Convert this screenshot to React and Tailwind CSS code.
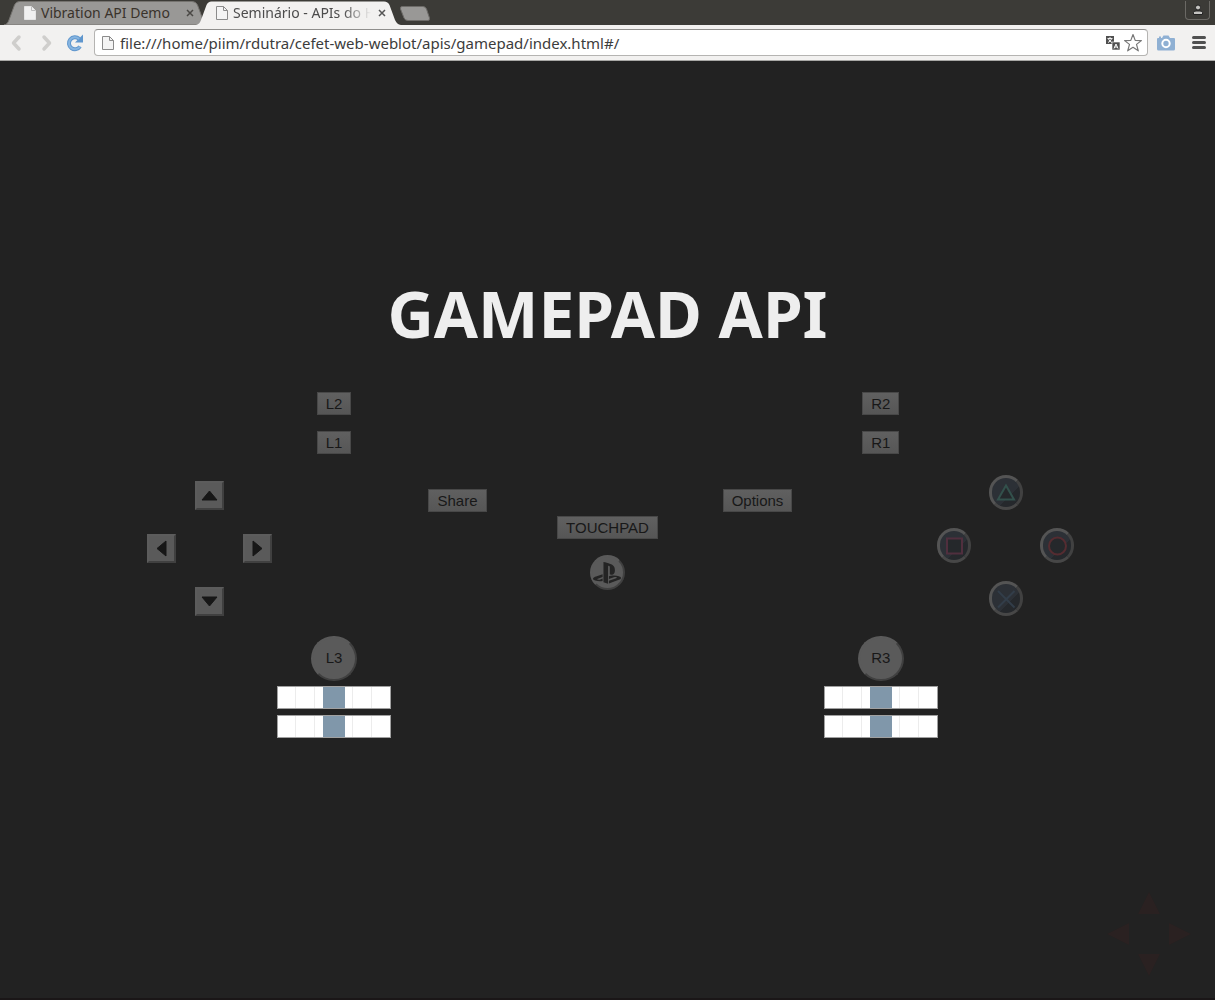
import React from "react";
import { FaPlaystation } from "react-icons/fa";

const uiFont = "font-['Noto_Sans','Open_Sans',sans-serif]";
const padFont = "font-['Liberation_Sans',Arial,sans-serif]";

function PageIcon({ filled = false, className }) {
  return (
    <svg viewBox="0 0 12 16" className={className} aria-hidden="true">
      <path d="M.5 1.5h7l4 4v9h-11z" fill={filled ? "#f0f0f0" : "#f4f4f4"} stroke={filled ? "#e4e4e4" : "#8b8b8b"} />
      <path d="M7.5 1.5v4h4" fill="none" stroke={filled ? "#bdbdbd" : "#8b8b8b"} />
    </svg>
  );
}

function Tab({ title, active }) {
  return (
    <div className={active ? "relative z-10 -ml-[13px] h-6 w-[205px]" : "relative h-6 w-[205px]"}>
      <svg viewBox="0 0 205 24" preserveAspectRatio="none" className="absolute inset-0 h-full w-full" aria-hidden="true">
        <path
          d="M0 24C3 23.500 4 21.500 5 19L10.500 4Q12 0.500 15.500 0.500H188Q192 0.500 193.500 4L199 19C200.500 22 202 23.500 205 24Z"
          fill={active ? "#f2f1f0" : "#999896"}
          stroke={active ? "none" : "#75736f"}
        />
      </svg>
      <div className="relative flex h-full items-center pl-5 pr-[13px]">
        <button className="flex min-w-0 flex-1 items-center gap-[5px] text-left">
          <PageIcon filled={!active} className="h-4 w-3 shrink-0" />
          <span
            className={
              active
                ? "whitespace-nowrap text-sm leading-5 text-[#4c4c4c] [mask-image:linear-gradient(to_right,black_110px,transparent_138px)]"
                : "whitespace-nowrap text-sm leading-5 text-[#3a332b]"
            }
          >
            {title}
          </span>
        </button>
        <button aria-label={"Close " + title} className="flex size-3 items-center justify-center">
          <svg viewBox="0 0 8 8" className="size-2">
            <path d="M1 1l6 6M7 1L1 7" stroke={active ? "#555" : "#4a4845"} strokeWidth="1.500" />
          </svg>
        </button>
      </div>
    </div>
  );
}

function Chevron({ flip }) {
  return (
    <button aria-label={flip ? "Forward" : "Back"} className="flex h-6 w-3 items-center justify-center">
      <svg viewBox="0 0 12 18" className={flip ? "h-[18px] w-3 -scale-x-100" : "h-[18px] w-3"}>
        <path d="M9 3L3.500 9L9 15" fill="none" stroke="#cfcecc" strokeWidth="3.500" strokeLinecap="round" strokeLinejoin="round" />
      </svg>
    </button>
  );
}

function BrowserChrome() {
  return (
    <header className={uiFont}>
      <div className="flex h-[25px] items-end bg-[#3c3b37] pl-1">
        <Tab title="Vibration API Demo" />
        <Tab title="Seminário - APIs do H" active />
        <button aria-label="New tab" className="-ml-0.5 mb-1 h-[15px] w-8">
          <svg viewBox="0 0 32 15" className="h-full w-full">
            <path d="M3 .5H24Q26.500 .5 27.500 3L30.500 12Q31 14.500 29 14.500H9Q6 14.500 5 12L1.500 3Q1 .5 3 .5Z" fill="#999896" stroke="#6d6b68" />
          </svg>
        </button>
        <button aria-label="User" className="mb-[5px] ml-auto mr-[5px] flex h-[19px] w-[25px] items-center justify-center rounded-b border border-t-0 border-[#6b6965] bg-[#3c3b37]">
          <svg viewBox="0 0 12 12" className="size-3 shrink-0">
            <path d="M1.500 10.500V8.500Q1.500 7 4 7H8Q10.500 7 10.500 8.500V10.500Z" fill="#c4c3c0" stroke="#222" />
            <circle cx="6" cy="3.500" r="2.500" fill="#c4c3c0" stroke="#222" />
          </svg>
        </button>
      </div>
      <div className="flex h-9 items-center border-b border-[#a9a8a6] bg-[#f2f1f0] pl-2.5 pr-[9px]">
        <Chevron />
        <div className="w-[19px]" />
        <Chevron flip />
        <button aria-label="Reload" className="ml-[13px] size-[18px]">
          <svg viewBox="0 0 18 18" className="size-[18px]">
            <path d="M14 12.500A6 6 0 1 1 13 4.800" fill="none" stroke="#5f96cd" strokeWidth="4" />
            <path d="M9 8.500H17V.5Z" fill="#5f96cd" />
            <path d="M14 12.500A6 6 0 1 1 13 4.800" fill="none" stroke="#86b4e0" strokeWidth="2" />
          </svg>
        </button>
        <div className="ml-2.5 flex h-[27px] flex-1 items-center rounded-sm border border-[#b5b4b2] border-t-[#8f8e8c] bg-white pl-[7px] pr-1">
          <PageIcon className="h-4 w-3 shrink-0" />
          <input
            aria-label="Address"
            type="text"
            defaultValue="file:///home/piim/rdutra/cefet-web-weblot/apis/gamepad/index.html#/"
            className="ml-1.5 min-w-0 flex-1 bg-transparent text-[15px] leading-6 text-[#3c3c3c] outline-none"
          />
          <button aria-label="Translate" className="size-4">
            <svg viewBox="0 0 16 16" className="size-4">
              <path d="M1 1h8v8H1z" fill="#505050" />
              <path d="M2.500 3.500h5M5 2v1.500M3.500 4Q4.500 6.500 7 7.500M6.500 4Q5.500 6.500 3 7.500" stroke="#fff" strokeWidth=".9" fill="none" />
              <path d="M7 7h8v8H7z" fill="#505050" stroke="#fff" strokeWidth=".6" />
              <path d="M9 13.500L11 9l2 4.500M9.700 12h2.600" stroke="#fff" fill="none" />
            </svg>
          </button>
          <button aria-label="Bookmark" className="ml-0.5 size-5">
            <svg viewBox="0 0 20 20" className="size-5">
              <path d="M10 1.500L12.200 7.400L18.400 7.600L13.500 11.400L15.300 17.800L10 14.300L4.700 17.800L6.500 11.400L1.600 7.600L7.800 7.400Z" fill="#fff" stroke="#777" strokeWidth="1.200" strokeLinejoin="round" />
            </svg>
          </button>
        </div>
        <button aria-label="Screenshot" className="ml-[9px] h-[18px] w-[18px]">
          <svg viewBox="0 0 18 18" className="size-[18px]">
            <path d="M0 5Q0 4 1 4H2V2.500H4V4H5L6.500 1.500H11.500L13 4H17Q18 4 18 5V15Q18 16.500 16.500 16.500H1.500Q0 16.500 0 15Z" fill="#8fb0d3" />
            <circle cx="9" cy="9.500" r="3.700" fill="#8fb0d3" stroke="#fff" strokeWidth="2" />
          </svg>
        </button>
        <button aria-label="Menu" className="ml-[17px] flex w-3.5 flex-col gap-0.5">
          <span className="h-[3px] rounded-sm bg-[#505050]" />
          <span className="h-[3px] rounded-sm bg-[#505050]" />
          <span className="h-[3px] rounded-sm bg-[#505050]" />
        </button>
      </div>
    </header>
  );
}

function PadButton({ children }) {
  return (
    <button className="h-[23px] border border-[#484848] bg-linear-to-b from-[#606060] to-[#565656] px-2 text-[15px] leading-5 text-[#181818]">
      {children}
    </button>
  );
}

const arrowPaths = {
  Up: "M8.500 4L16 13H1Z",
  Down: "M1 4H16L8.500 13Z",
  Left: "M4 8.500L13 1V16Z",
  Right: "M4 1L13 8.500L4 16Z",
};

function ArrowButton({ dir }) {
  return (
    <button aria-label={dir} className="flex size-[29px] items-center justify-center border-2 border-b-[#404040] border-l-[#5c5c5c] border-r-[#404040] border-t-[#5c5c5c] bg-[#5a5a5a]">
      <svg viewBox="0 0 17 17" className="size-[17px] shrink-0">
        <path d={arrowPaths[dir]} fill="#171717" stroke="#171717" strokeLinejoin="round" />
      </svg>
    </button>
  );
}

function FaceButton({ label, color, children }) {
  return (
    <button aria-label={label} className="flex h-[35px] w-[34px] items-center justify-center rounded-full border-3 border-[#545454] border-b-[#474747] border-r-[#414141] bg-linear-to-br from-[#2c3036] from-60% to-[#25282c] to-60% bg-origin-border">
      <svg viewBox="0 0 20 20" className="size-5 shrink-0" fill="#25282b" stroke={color} strokeWidth="2">
        {children}
      </svg>
    </button>
  );
}

function Cross({ top, left, right, bottom, className }) {
  return (
    <div className={"flex flex-col items-center " + className}>
      {top}
      <div className="flex w-full justify-between">
        {left}
        {right}
      </div>
      {bottom}
    </div>
  );
}

function Axis({ label }) {
  return (
    <input
      type="range"
      aria-label={label}
      defaultValue="50"
      className="block h-[23px] w-[114px] appearance-none border border-[#a0a0a0] bg-[repeating-linear-gradient(to_right,#fff_0_17px,#ececec_17px_18px,#fff_18px_19px)] [&::-webkit-slider-thumb]:h-[21px] [&::-webkit-slider-thumb]:w-[22px] [&::-webkit-slider-thumb]:appearance-none [&::-webkit-slider-thumb]:bg-[#8097aa]"
    />
  );
}

function Stick({ name }) {
  return (
    <div className="flex flex-col items-center">
      <button className="h-[45px] w-[46px] rounded-full border-2 border-[#5a5a5a] border-b-[#404040] border-r-[#404040] bg-[#5a5a5a] text-[15px] text-[#181818]">
        {name}
      </button>
      <div className="mt-[5px] flex flex-col gap-1.5">
        <Axis label={name + " horizontal"} />
        <Axis label={name + " vertical"} />
      </div>
    </div>
  );
}

const slideControls = [
  { label: "Slide up", cell: "col-start-2 row-start-1", d: "M11 0L22 22H0Z" },
  { label: "Previous slide", cell: "col-start-1 row-start-2", d: "M0 11L22 0V22Z" },
  { label: "Next slide", cell: "col-start-3 row-start-2", d: "M22 11L0 0V22Z" },
  { label: "Slide down", cell: "col-start-2 row-start-3", d: "M0 0H22L11 22Z" },
];

export default function App() {
  return (
    <div className="flex min-h-screen flex-col bg-[#222222]">
      <BrowserChrome />
      <main className="relative flex flex-1 flex-col items-center border-b-2 border-[#1a1617] pt-[214px]">
        <h1 className={uiFont + " text-center text-[64px] font-bold leading-[78px] text-[#eeeeee]"}>GAMEPAD API</h1>
        <section aria-label="Gamepad" className={padFont + " flex w-full flex-col items-center pt-[39px]"}>
          <div className="grid w-[90%] grid-cols-2 justify-items-center gap-y-4">
            <PadButton>L2</PadButton>
            <PadButton>R2</PadButton>
            <PadButton>L1</PadButton>
            <PadButton>R1</PadButton>
          </div>
          <div className="mt-[21px] flex w-[77%] justify-between px-px">
            <div className="w-[137px] px-1.5 pt-1.5">
              <Cross
                className="gap-6"
                top={<ArrowButton dir="Up" />}
                left={<ArrowButton dir="Left" />}
                right={<ArrowButton dir="Right" />}
                bottom={<ArrowButton dir="Down" />}
              />
            </div>
            <div className="grid w-[450px] grid-cols-3 content-start justify-items-center pt-3.5">
              <PadButton>Share</PadButton>
              <div className="flex flex-col items-center gap-4 pt-[27px]">
                <PadButton>TOUCHPAD</PadButton>
                <button aria-label="PS" className="flex size-[35px] items-center justify-center rounded-full border-2 border-[#5a5a5a] border-b-[#404040] border-r-[#404040] bg-[#5a5a5a] text-[#242424]">
                  <FaPlaystation className="size-7 shrink-0" />
                </button>
              </div>
              <PadButton>Options</PadButton>
            </div>
            <div className="w-[137px]">
              <Cross
                className="gap-[18px]"
                top={
                  <FaceButton label="Triangle" color="#33514c">
                    <path d="M10 2.500L18 16.500H2Z" />
                  </FaceButton>
                }
                left={
                  <FaceButton label="Square" color="#502f3e">
                    <path d="M3 2.500H18V17.500H3Z" />
                  </FaceButton>
                }
                right={
                  <FaceButton label="Circle" color="#552c31">
                    <circle cx="10.500" cy="10" r="8.500" />
                  </FaceButton>
                }
                bottom={
                  <FaceButton label="Cross" color="#323d49">
                    <path d="M2 2L18.500 18.500M18.500 2L2 18.500" />
                  </FaceButton>
                }
              />
            </div>
          </div>
          <div className="mt-5 grid w-[90%] grid-cols-2 justify-items-center">
            <Stick name="L3" />
            <Stick name="R3" />
          </div>
        </section>
        <nav aria-label="Slides" className="absolute bottom-[22px] right-6 grid grid-cols-3 gap-[9px]">
          {slideControls.map(({ label, cell, d }) => (
            <button key={label} aria-label={label} className={"size-[22px] " + cell}>
              <svg viewBox="0 0 22 22" className="size-[22px]">
                <path d={d} fill="#2a2121" />
              </svg>
            </button>
          ))}
        </nav>
      </main>
    </div>
  );
}
